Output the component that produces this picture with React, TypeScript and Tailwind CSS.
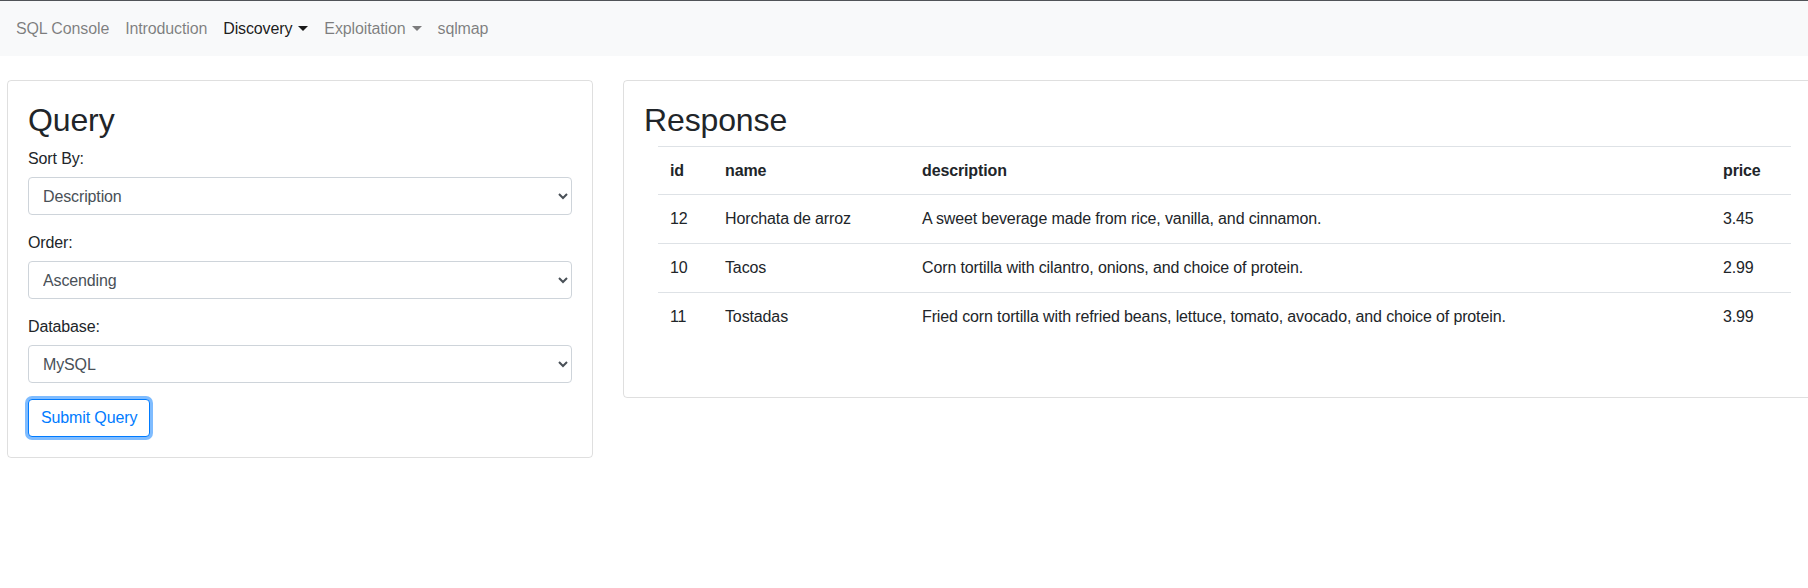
import React from 'react';

const font = { fontFamily: '"Liberation Sans", Arial, sans-serif' };

const navItems = [
  { label: 'SQL Console', active: false, caret: false },
  { label: 'Introduction', active: false, caret: false },
  { label: 'Discovery', active: true, caret: true },
  { label: 'Exploitation', active: false, caret: true },
  { label: 'sqlmap', active: false, caret: false },
];

const rows = [
  { id: '12', name: 'Horchata de arroz', description: 'A sweet beverage made from rice, vanilla, and cinnamon.', price: '3.45' },
  { id: '10', name: 'Tacos', description: 'Corn tortilla with cilantro, onions, and choice of protein.', price: '2.99' },
  { id: '11', name: 'Tostadas', description: 'Fried corn tortilla with refried beans, lettuce, tomato, avocado, and choice of protein.', price: '3.99' },
];

const Field = ({ label, value, options }: { label: string; value: string; options: string[] }) => (
  <div className="mb-4 flex flex-col">
    <label className="mb-[6px] text-base leading-6 text-[#212529]">{label}</label>
    <select
      defaultValue={value}
      className="h-[38px] w-full rounded border border-[#ced4da] bg-white px-[10px] text-base tracking-[-0.008em] text-[#495057]"
      style={font}
    >
      {options.map((o) => (
        <option key={o}>{o}</option>
      ))}
    </select>
  </div>
);

export default function App() {
  return (
    <div className="h-[588px] w-full overflow-hidden bg-white tracking-[-0.008em] text-[#212529]" style={font}>
      <nav className="flex h-[56px] items-center border-t border-[#505358] bg-[#f8f9fa] px-2">
        {navItems.map((item) => (
          <a
            key={item.label}
            className={`flex items-center px-2 text-base leading-6 ${item.active ? 'text-black/90' : 'text-black/50'}`}
          >
            {item.label}
            {item.caret && (
              <span className="ml-[6px] inline-block h-0 w-0 border-x-[5px] border-t-[5px] border-x-transparent border-t-current" />
            )}
          </a>
        ))}
      </nav>

      <div className="flex items-start gap-[30px] pl-[7px] pt-[24px]">
        <div className="w-[586px] shrink-0 rounded border border-black/[0.125] p-5">
          <h2 className="mb-2 text-[32px] leading-[38px]">Query</h2>
          <Field label="Sort By:" value="Description" options={['Id', 'Name', 'Description', 'Price']} />
          <Field label="Order:" value="Ascending" options={['Ascending', 'Descending']} />
          <Field label="Database:" value="MySQL" options={['MySQL', 'PostgreSQL', 'SQLite']} />
          <button className="h-[38px] rounded border border-[#007bff] bg-white px-3 text-base text-[#007bff] ring-[3px] ring-[#007bff]/50">
            Submit Query
          </button>
        </div>

        <div className="h-[318px] w-[1202px] shrink-0 rounded border border-black/[0.125] p-5">
          <h2 className="mb-[7px] text-[32px] leading-[38px]">Response</h2>
          <table className="ml-[14px] w-[1133px] table-fixed border-collapse text-left text-base leading-6">
            <colgroup>
              <col className="w-[55px]" />
              <col className="w-[197px]" />
              <col className="w-[801px]" />
              <col className="w-[80px]" />
            </colgroup>
            <thead>
              <tr className="border-t border-[#dee2e6]">
                <th className="px-3 pb-[11px] pt-3 font-bold">id</th>
                <th className="px-3 pb-[11px] pt-3 font-bold">name</th>
                <th className="px-3 pb-[11px] pt-3 font-bold">description</th>
                <th className="px-3 pb-[11px] pt-3 font-bold">price</th>
              </tr>
            </thead>
            <tbody>
              {rows.map((r) => (
                <tr key={r.id} className="border-t border-[#dee2e6]">
                  <td className="p-3">{r.id}</td>
                  <td className="p-3">{r.name}</td>
                  <td className="p-3">{r.description}</td>
                  <td className="p-3">{r.price}</td>
                </tr>
              ))}
            </tbody>
          </table>
        </div>
      </div>
    </div>
  );
}
